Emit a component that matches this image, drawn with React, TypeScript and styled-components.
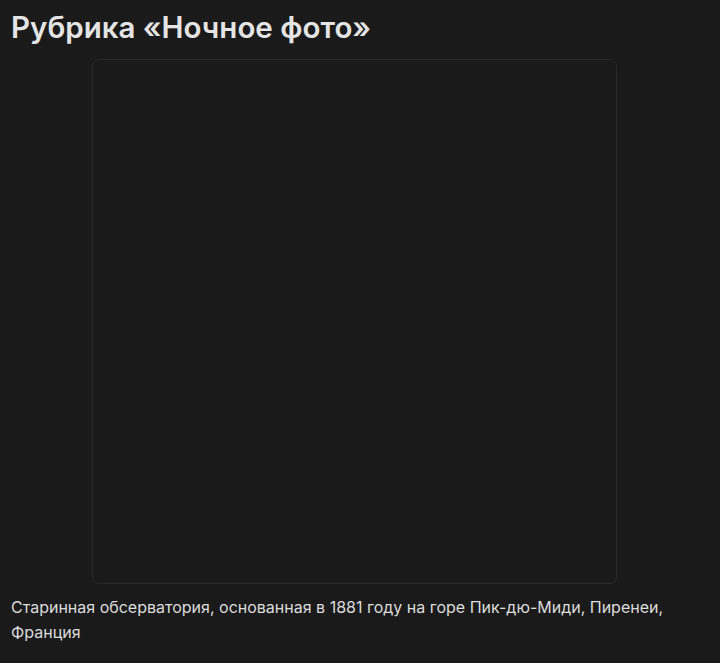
import styled, { createGlobalStyle } from 'styled-components';

const GlobalStyle = createGlobalStyle`
	html, body {
		margin: 0;
		padding: 0;
		background: #1a1a1a;
	}
	body {
		font-family: Inter, "Noto Sans", sans-serif;
		color: #e3e3e3;
	}
`;

const Page = styled.main`
	padding: 8px 22px 12px 11px;
`;

const Title = styled.h1`
	margin: 0 0 13px;
	font-size: 29.5px;
	font-weight: 600;
	line-height: 38px;
	color: #e4e4e4;
`;

const Figure = styled.figure`
	margin: 0;
	display: flex;
	flex-direction: column;
`;

const PhotoFrame = styled.div`
	align-self: center;
	width: 525px;
	height: 525px;
	box-sizing: border-box;
	border: 1px solid #2a2a2a;
	border-radius: 7px;
	background: #1a1a1a;
`;

const Caption = styled.figcaption`
	margin-top: 11px;
	font-size: 16px;
	line-height: 25px;
	color: #dcdcdc;
`;

export default function App() {
	return (
		<>
			<GlobalStyle />
			<Page>
				<Title>Рубрика «Ночное фото»</Title>
				<Figure>
					<PhotoFrame />
					<Caption>
						Старинная обсерватория, основанная в 1881 году на горе Пик-дю-Миди, Пиренеи, Франция
					</Caption>
				</Figure>
			</Page>
		</>
	);
}
